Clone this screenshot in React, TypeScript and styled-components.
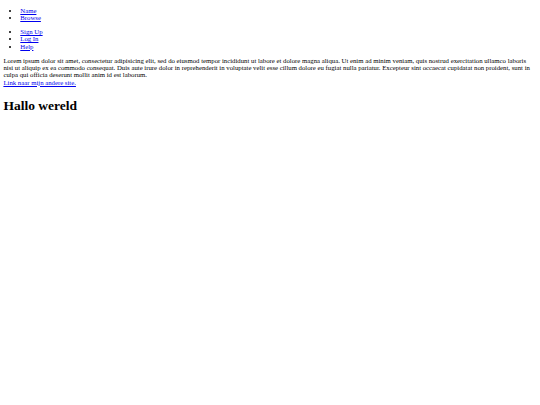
import React from "react";
import styled, { createGlobalStyle } from "styled-components";

// sizes are those of a plain 1280px page shrunk to the 540px window
const GlobalStyle = createGlobalStyle`
  html {
    background: #fff;
  }
  body {
    margin: 0 3.4px;
    font-family: "Liberation Serif", "Times New Roman", serif;
    font-size: 6.75px;
    line-height: 7.3px;
    color: #000;
  }
`;

const NavList = styled.ul`
  margin: 6.75px 0;
  padding-left: 16.9px;
  list-style: disc;
`;

const NavItem = styled.li`
  line-height: 7.3px;
`;

const PlainLink = styled.a`
  color: #0000ee;
  text-decoration: underline;
`;

const Intro = styled.p`
  margin: 6.75px 0 0;
  line-height: 7.3px;
`;

const Heading = styled.h1`
  margin: 12px 0;
  font-size: 13.5px;
  line-height: 15.5px;
  font-weight: bold;
`;

const topNav = ["Name", "Browse"];
const userNav = ["Sign Up", "Log In", "Help"];

export default function App() {
  return (
    <>
      <GlobalStyle />
      <header>
        <NavList>
          {topNav.map((label) => (
            <NavItem key={label}>
              <PlainLink href="#">{label}</PlainLink>
            </NavItem>
          ))}
        </NavList>
        <NavList>
          {userNav.map((label) => (
            <NavItem key={label}>
              <PlainLink href="#">{label}</PlainLink>
            </NavItem>
          ))}
        </NavList>
      </header>
      <Intro>
        Lorem ipsum dolor sit amet, consectetur adipisicing elit, sed do
        eiusmod tempor incididunt ut labore et dolore magna aliqua. Ut enim ad
        minim veniam, quis nostrud exercitation ullamco laboris nisi ut aliquip
        ex ea commodo consequat. Duis aute irure dolor in reprehenderit in
        voluptate velit esse cillum dolore eu fugiat nulla pariatur. Excepteur
        sint occaecat cupidatat non proident, sunt in culpa qui officia deserunt
        mollit anim id est laborum.
        <br />
        <PlainLink href="#">Link naar mijn andere site.</PlainLink>
      </Intro>
      <Heading>Hallo wereld</Heading>
    </>
  );
}
